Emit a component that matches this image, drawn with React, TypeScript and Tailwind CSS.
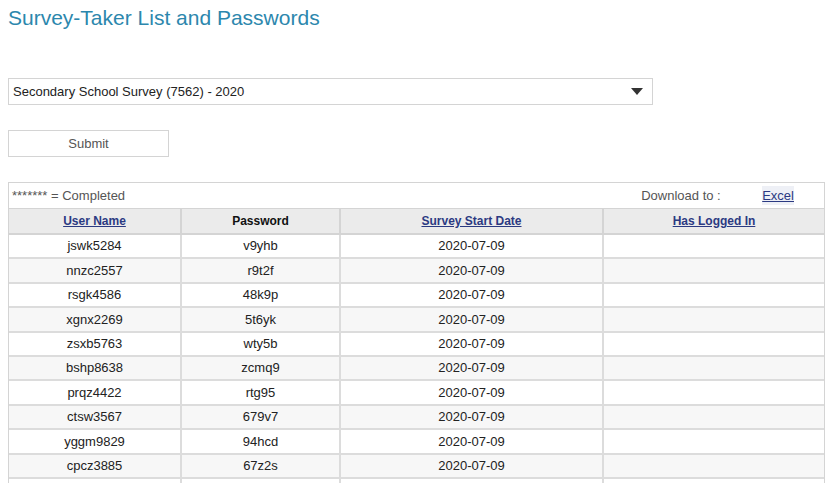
import React from 'react';

const rows = [
  ['jswk5284', 'v9yhb'],
  ['nnzc2557', 'r9t2f'],
  ['rsgk4586', '48k9p'],
  ['xgnx2269', '5t6yk'],
  ['zsxb5763', 'wty5b'],
  ['bshp8638', 'zcmq9'],
  ['prqz4422', 'rtg95'],
  ['ctsw3567', '679v7'],
  ['yggm9829', '94hcd'],
  ['cpcz3885', '67z2s'],
];

export default function App() {
  return (
    <div className="h-[490px] w-[831px] overflow-hidden bg-white pl-2 font-['Liberation_Sans',Arial,sans-serif] text-[13px] text-[#333]">
      {/* Titel */}
      <h1 className="pt-[6px] text-[21px] leading-[24px] text-[#2c87ad]">Survey-Taker List and Passwords</h1>

      {/* Auswahl */}
      <div className="mt-[48px] flex h-[27px] w-[645px] items-center justify-between border border-[#d4d4d4] pl-[4px] pr-[9px] text-[13px] text-[#222]">
        <span>Secondary School Survey (7562) - 2020</span>
        <svg width="12" height="8" viewBox="0 0 12 8">
          <path d="M0 0h12L6 7z" fill="#333" />
        </svg>
      </div>

      <button className="mt-[25px] h-[27px] w-[161px] border border-[#d4d4d4] bg-white text-[13px] text-[#555]">
        Submit
      </button>

      {/* Tabelle */}
      <div className="mt-[25px] w-[817px] border-l border-r border-t border-[#d4d4d4]">
        <div className="flex h-[26px] items-center border-b border-[#d4d4d4] pl-[3px] text-[#555]">
          <span className="flex-1">******* = Completed</span>
          <span className="w-[121px]">Download to :</span>
          <span className="mr-[30px] bg-[#eef0f6] text-[#2b3a82] underline">Excel</span>
        </div>
        <table className="w-full table-fixed border-collapse">
          <colgroup>
            <col className="w-[172px]" />
            <col className="w-[159px]" />
            <col className="w-[263px]" />
            <col />
          </colgroup>
          <thead>
            <tr className="h-[25px] bg-[#ebebeb] text-[12px] font-bold">
              <th className="border-b-2 border-r-2 border-[#d4d4d4] text-[#2b3a82] underline">User Name</th>
              <th className="border-b-2 border-r-2 border-[#d4d4d4] text-[#111]">Password</th>
              <th className="border-b-2 border-r-2 border-[#d4d4d4] text-[#2b3a82] underline">Survey Start Date</th>
              <th className="border-b-2 border-[#d4d4d4] text-[#2b3a82] underline">Has Logged In</th>
            </tr>
          </thead>
          <tbody>
            {rows.map(([user, pass], i) => (
              <tr key={user} className={`h-[24.4px] text-center text-[#222] ${i % 2 ? 'bg-[#f7f7f7]' : 'bg-white'}`}>
                <td className="border-b-2 border-r-2 border-[#dcdcdc]">{user}</td>
                <td className="border-b-2 border-r-2 border-[#dcdcdc]">{pass}</td>
                <td className="border-b-2 border-r-2 border-[#dcdcdc]">2020-07-09</td>
                <td className="border-b-2 border-[#dcdcdc]"></td>
              </tr>
            ))}
            <tr className="h-[5px] bg-white">
              <td className="border-r-2 border-[#dcdcdc] p-0"></td>
              <td className="border-r-2 border-[#dcdcdc] p-0"></td>
              <td className="border-r-2 border-[#dcdcdc] p-0"></td>
              <td className="p-0"></td>
            </tr>
          </tbody>
        </table>
      </div>
    </div>
  );
}
